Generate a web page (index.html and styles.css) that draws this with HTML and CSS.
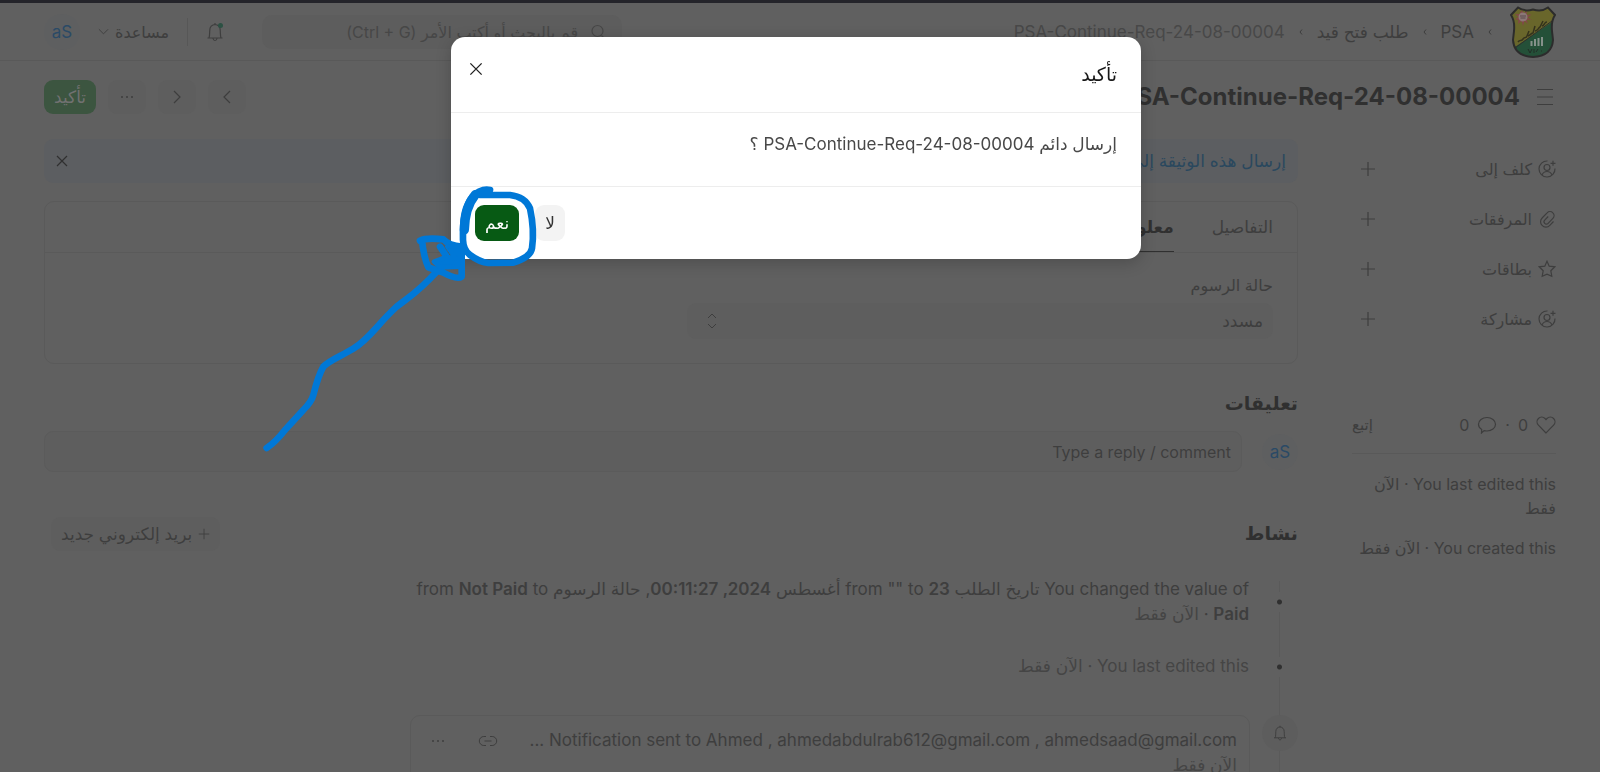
FILE: index.html
```html
<!DOCTYPE html>
<html lang="ar" dir="rtl">
<head>
<meta charset="utf-8">
<title>PSA-Continue-Req-24-08-00004</title>
<link rel="stylesheet" href="styles.css">
</head>
<body>
<svg class="defs" aria-hidden="true">
  <symbol id="plus" viewBox="0 0 16 16"><path d="M8 1v14M1 8h14"/></symbol>
  <symbol id="cross" viewBox="0 0 16 16"><path d="M3 3l10 10M13 3L3 13"/></symbol>
  <symbol id="assign" viewBox="0 0 18 18"><path d="M9.500 1A8 8 0 1 0 17 8.500M4 15c1-2.500 2.800-3.500 5-3.500s4 1 5 3.500M15 .8v5M12.500 3.300h5"/><circle cx="9" cy="7.500" r="3"/></symbol>
  <symbol id="clip" viewBox="0 0 18 18"><path d="M15.500 11.500l-3.700 3.900a5.200 5.200 0 0 1-7.700 0 5.200 5.200 0 0 1 0-7.400l5-5.200a3.900 3.900 0 0 1 5.800 0 3.900 3.900 0 0 1 0 5.500l-4.800 5a2.300 2.300 0 0 1-3.400 0 2.300 2.300 0 0 1 0-3.200l3.500-3.600"/></symbol>
  <symbol id="star" viewBox="0 0 18 18"><path d="M9 1.200l2.200 5 5.600.6-4 3.900 1 5.500L9 14.200 4.200 16.200l1-5.500-4-3.900 5.600-.6z"/></symbol>
  <symbol id="heart" viewBox="0 0 20 18"><path d="M10 17L2.400 9.200a4.800 4.800 0 0 1 0-6.700 4.700 4.700 0 0 1 6.600 0l1 1.100 1-1.100a4.700 4.700 0 0 1 6.600 0 4.800 4.800 0 0 1 0 6.700z"/></symbol>
  <symbol id="bubble" viewBox="0 0 20 18"><path d="M10 1.500c4.700 0 8.500 3 8.500 6.800S14.700 15 10 15c-1 0-2-.1-2.900-.4L4.500 17l.2-3.500C2.700 12.300 1.500 10.400 1.500 8.300 1.500 4.500 5.300 1.500 10 1.500z"/></symbol>
  <symbol id="bell" viewBox="0 0 18 20"><path d="M1.500 16h15M3 16c.8-2 .5-5 .8-8A5.300 5.300 0 0 1 9 2.500 5.300 5.300 0 0 1 14.200 8c.3 3 0 6 .8 8M7 16.500c.3 1.500 1 2 2 2s1.700-.5 2-2M9 1v1.500"/></symbol>
  <symbol id="link" viewBox="0 0 20 12"><path d="M8 1.500H5.800a4.500 4.500 0 0 0 0 9H8M12 1.500h2.200a4.500 4.500 0 0 1 0 9H12M6.500 6h7"/></symbol>
</svg>

<header class="navbar">
  <nav class="crumbs">
    <a href="#" class="logo" aria-label="الرئيسية">
      <svg viewBox="0 0 46 52" width="46" height="52">
        <path d="M8 1.500Q14 6 23 3.500Q32 6 38 1.500L45 9Q41 15 42 25L43 34Q42 50 23 51Q4 50 3 34L4 25Q5 15 1 9Z" fill="#245038"/>
        <path d="M8 1.500Q14 6 23 3.500Q32 6 38 1.500L45 9Q43 12 42 16L3.500 42Q2 35 4 25Q5 15 1 9Z" fill="#69662b"/>
        <path d="M42 15L5 42" stroke="#2f2f2c"/>
        <path d="M12 4l1.500 3.500L17 5l-.5 4 5-.5-4 3 4 2.500-5-.3 1.500 4.300-3.500-3L13 20l-1.500-5L8 18l.5-4L5 13l3.500-2L5 8l4 .3z" fill="#824848"/>
        <circle cx="13" cy="11" r="4.500" fill="#8b7777"/>
        <path d="M10 10h6M10.500 12h5" stroke="#5b4a4c"/>
        <path d="M8 36c2-3 3 0 5-3s3 0 4-3l2-5M18 30c3-1 3-3 5-3l2-7M25 25c3 0 3-3 5-4l3-6M32 20c3-1 2-4 5-4" fill="none" stroke="#34321c" stroke-width="1.500"/>
        <path d="M21.500 40v-5M25 40v-7M28.500 40v-8M32 40v-9" stroke="#85918a" stroke-width="2"/>
        <path d="M18 43l2 4 2-4M24 43v4M28 43l-2 3M31 45h1" fill="none" stroke="#222c27"/>
        <path d="M8 1.500Q14 6 23 3.500Q32 6 38 1.500L45 9Q41 15 42 25L43 34Q42 50 23 51Q4 50 3 34L4 25Q5 15 1 9Z" fill="none" stroke="#2c2c2c" stroke-width="2"/>
      </svg>
    </a>
    <svg class="sep" viewBox="0 0 4 6"><path d="M3 .5L1 3l2 2.500"/></svg>
    <a href="#">PSA</a>
    <svg class="sep" viewBox="0 0 4 6"><path d="M3 .5L1 3l2 2.500"/></svg>
    <a href="#">طلب فتح قيد</a>
    <svg class="sep" viewBox="0 0 4 6"><path d="M3 .5L1 3l2 2.500"/></svg>
    <span class="here">PSA-Continue-Req-24-08-00004</span>
  </nav>
  <div class="tools">
    <label class="search">
      <svg viewBox="0 0 16 16" class="icon small"><circle cx="7.500" cy="7" r="5.500"/><path d="M11.500 11.500l3 3"/></svg>
      <input type="text" aria-label="بحث" placeholder="قم بالبحث أو أكتب الأمر (Ctrl + G)">
    </label>
    <button class="plain notify" aria-label="الإشعارات"><svg class="icon bell"><use href="#bell"/></svg><span class="dot"></span></button>
    <span class="rule"></span>
    <button class="plain help">مساعدة <svg viewBox="0 0 12 8" class="chev"><path d="M1 1l5 5 5-5"/></svg></button>
    <span class="avatar">aS</span>
  </div>
</header>

<main class="page">
  <div class="page-head">
    <button class="plain" aria-label="القائمة"><svg viewBox="0 0 18 18" class="icon"><path d="M1 1.500h16M1 9h16M1 16.500h16"/></svg></button>
    <h1>PSA-Continue-Req-24-08-00004</h1>
    <div class="actions">
      <button class="btn" aria-label="السابق"><svg viewBox="0 0 16 16" class="icon small"><path d="M11 2L5 8l6 6"/></svg></button>
      <button class="btn" aria-label="التالي"><svg viewBox="0 0 16 16" class="icon small"><path d="M5 2l6 6-6 6"/></svg></button>
      <button class="btn" aria-label="المزيد"><svg viewBox="0 0 16 16" class="icon small dots"><circle cx="3" cy="8" r="1"/><circle cx="8" cy="8" r="1"/><circle cx="13" cy="8" r="1"/></svg></button>
      <button class="btn primary">تأكيد</button>
    </div>
  </div>

  <div class="columns">
    <aside class="side">
      <ul class="side-list">
        <li><svg class="icon"><use href="#assign"/></svg><span>كلف إلى</span><button class="plain" aria-label="إضافة"><svg class="icon small"><use href="#plus"/></svg></button></li>
        <li><svg class="icon"><use href="#clip"/></svg><span>المرفقات</span><button class="plain" aria-label="إضافة"><svg class="icon small"><use href="#plus"/></svg></button></li>
        <li><svg class="icon"><use href="#star"/></svg><span>بطاقات</span><button class="plain" aria-label="إضافة"><svg class="icon small"><use href="#plus"/></svg></button></li>
        <li><svg class="icon"><use href="#assign"/></svg><span>مشاركة</span><button class="plain" aria-label="إضافة"><svg class="icon small"><use href="#plus"/></svg></button></li>
      </ul>
      <div class="stats">
        <svg class="icon wide"><use href="#heart"/></svg><span>0</span><span>·</span>
        <svg class="icon wide"><use href="#bubble"/></svg><span>0</span>
        <a href="#" class="follow">إتبع</a>
      </div>
      <p>You last edited this · الآن فقط</p>
      <p>You created this · الآن فقط</p>
    </aside>

    <section class="main">
      <div class="banner"><span>إرسال هذه الوثيقة إلى التأكيد</span><button class="plain" aria-label="إغلاق"><svg class="icon small"><use href="#cross"/></svg></button></div>

      <div class="card">
        <div class="tabs">
          <a href="#">التفاصيل</a>
          <a href="#" class="active">معلومات الرسوم</a>
        </div>
        <div class="field">
          <label for="fee">حالة الرسوم</label>
          <div class="select">
            <select id="fee"><option>مسدد</option></select>
            <svg viewBox="0 0 10 16"><path d="M1 5l4-4 4 4M1 11l4 4 4-4"/></svg>
          </div>
        </div>
      </div>

      <h2>تعليقات</h2>
      <div class="comment">
        <span class="avatar">aS</span>
        <input type="text" aria-label="تعليق" placeholder="Type a reply / comment">
      </div>

      <div class="activity-head">
        <h2>نشاط</h2>
        <button class="btn mail"><svg class="icon tiny"><use href="#plus"/></svg> بريد إلكتروني جديد</button>
      </div>

      <ol class="timeline">
        <li><span class="mark"></span><div class="entry">You changed the value of تاريخ الطلب from "" to <b>23</b> أغسطس <b>2024, 00:11:27</b>, حالة الرسوم from <b>Not Paid</b> to <b>Paid</b> · <span class="time">الآن فقط</span></div></li>
        <li><span class="mark"></span><div class="entry light">You last edited this · الآن فقط</div></li>
        <li class="mail-item"><span class="badge"><svg class="icon small"><use href="#bell"/></svg></span>
          <div class="note">
            <div>Notification sent to Ahmed , ahmedabdulrab612@gmail.com , ahmedsaad@gmail.com ...<br><span class="time">الآن فقط</span></div>
            <button class="plain" aria-label="رابط"><svg class="link"><use href="#link"/></svg></button>
            <button class="plain" aria-label="المزيد"><svg viewBox="0 0 16 16" class="icon small dots"><circle cx="3" cy="8" r="1"/><circle cx="8" cy="8" r="1"/><circle cx="13" cy="8" r="1"/></svg></button>
          </div>
        </li>
      </ol>
    </section>
  </div>
</main>

<div class="overlay">
  <div class="modal" role="dialog" aria-labelledby="dlg-title">
    <div class="modal-head"><h3 id="dlg-title">تأكيد</h3><button class="plain" aria-label="إغلاق"><svg class="close"><use href="#cross"/></svg></button></div>
    <div class="modal-body">إرسال دائم PSA-Continue-Req-24-08-00004 ؟</div>
    <div class="modal-foot"><button class="no">لا</button><button class="yes">نعم</button></div>
  </div>
</div>

<svg class="ink" viewBox="0 0 1020 840" aria-hidden="true">
  <path d="M750 30C730 24 705 38 690 60C672 90 668 120 669 180Q670 210 690 225Q720 247 745 249L820 248Q872 232 876 205Q884 150 870 85Q855 50 810 45L720 45"/>
  <path d="M706 44C685 70 674 100 673 150" stroke-width="28"/>
  <path d="M80 804Q105 788 135 750L190 690Q215 665 220 645Q235 585 250 560C270 540 300 530 340 506C390 475 410 435 470 380C510 348 530 340 590 275L665 210"/>
  <path d="M540 182Q560 172 610 178Q625 195 665 200L665 290Q650 300 610 278L565 262Q552 235 546 182M600 200L630 245"/>
  <path d="M582 245L615 232L646 234L622 200L668 198V260L600 262Z" class="fill"/>
</svg>
</body>
</html>
```
FILE: styles.css
```css
* { box-sizing: border-box; }
body {
  margin: 0;
  background: #606060;
  color: #3e3e3e;
  font: 17px/24px Inter, "DejaVu Sans", sans-serif;
  border-top: 3px solid #24242a;
  height: 100vh;
  overflow: hidden;
}
.defs { position: absolute; width: 0; height: 0; }
a { color: inherit; text-decoration: none; }
button, input, select { font: inherit; color: inherit; }
h1, h2, h3, p, ul, ol { margin: 0; padding: 0; list-style: none; }
svg { fill: none; stroke: currentColor; flex: none; }
.logo svg { stroke: none; display: block; }
.icon { width: 18px; height: 18px; stroke-width: 1.2; }
.icon.small { width: 16px; height: 16px; }
.icon.tiny { width: 12px; height: 12px; }
.icon.wide { width: 20px; }
.icon.dots { fill: currentColor; stroke: none; }
.plain { display: flex; align-items: center; border: 0; padding: 0; background: none; }

.navbar {
  display: flex;
  justify-content: space-between;
  align-items: center;
  height: 58px;
  padding: 0 44px;
  border-bottom: 1px solid #595959;
}
.crumbs { display: flex; align-items: center; gap: 14px; }
.logo { margin-left: 4px; }
.sep { width: 4px; height: 6px; }
.here { color: #484848; }
.tools { display: flex; align-items: center; font-size: 16px; }
.search {
  display: flex;
  align-items: center;
  gap: 12px;
  width: 360px;
  height: 34px;
  padding: 0 16px;
  border-radius: 10px;
  background: #5d5d5d;
  color: #474747;
}
.search input { flex: 1; min-width: 0; border: 0; padding: 0; background: none; }
input::placeholder { color: inherit; opacity: 1; }
.notify { position: relative; margin-right: 38px; }
.bell { height: 20px; }
.dot { position: absolute; top: 1px; right: 1px; width: 5px; height: 5px; border-radius: 50%; background: #2c5143; }
.rule { width: 1px; height: 28px; margin: 0 18px; background: #575757; }
.help { gap: 6px; }
.chev { width: 11px; height: 8px; }
.avatar {
  display: flex;
  align-items: center;
  justify-content: center;
  width: 36px;
  height: 36px;
  border-radius: 50%;
  background: #5e5f60;
  color: #2a4a66;
}
.tools .avatar { margin-right: 18px; font-size: 17px; }

.page { padding: 0 44px; }
.page-head { display: flex; align-items: center; gap: 16px; height: 72px; padding-right: 2px; }
h1 { font-size: 24px; line-height: 32px; font-weight: 700; color: #303030; }
.actions { display: flex; gap: 12px; margin-right: auto; }
.btn {
  display: flex;
  align-items: center;
  justify-content: center;
  gap: 6px;
  min-width: 38px;
  height: 34px;
  padding: 0 10px;
  border: 0;
  border-radius: 9px;
  background: #5e5e5e;
}
.primary { background: #3c5540; color: #717171; }

.columns { display: flex; gap: 54px; }
.side { width: 204px; flex: none; padding-top: 24px; font-size: 16px; }
.side-list { display: grid; gap: 26px; }
.side-list li { display: flex; align-items: center; gap: 6px; }
.side-list button { margin-right: auto; padding-left: 8px; }
.stats {
  display: flex;
  align-items: center;
  gap: 8px;
  margin: 82px 0 18px;
  padding-bottom: 16px;
  border-bottom: 1px solid #595959;
}
.follow { margin-right: auto; font-size: 15px; }
.side p { margin-bottom: 16px; }
.main { flex: 1; min-width: 0; padding-top: 6px; }
.banner {
  display: flex;
  align-items: center;
  justify-content: space-between;
  height: 44px;
  padding: 0 12px 0 10px;
  border-radius: 9px;
  background: #5c5e61;
  color: #2a485e;
}
.banner button { color: #303030; }
.card { margin-top: 18px; border: 1px solid #5a5a5a; border-radius: 10px; }
.tabs { display: flex; gap: 38px; height: 51px; padding: 0 24px; border-bottom: 1px solid #5a5a5a; }
.tabs a { line-height: 50px; }
.tabs .active { font-weight: 600; color: #303030; border-bottom: 1px solid #303030; }
.field { width: 50%; padding: 20px 24px 24px 16px; }
.field label { display: block; margin-bottom: 6px; font-size: 16px; }
.select { position: relative; }
.select select {
  width: 100%;
  height: 36px;
  padding: 0 10px;
  border: 0;
  border-radius: 9px;
  appearance: none;
  background: #5e5e5e;
}
.select svg { position: absolute; left: 20px; top: 10px; width: 10px; height: 16px; }
h2 { font-size: 19px; line-height: 28px; font-weight: 700; color: #303030; }
.main > h2 { margin-top: 26px; }
.comment { display: flex; gap: 20px; align-items: center; margin-top: 13px; }
.comment input {
  flex: 1;
  height: 41px;
  padding: 0 10px;
  border: 1px solid #5b5b5b;
  border-radius: 9px;
  background: #5e5e5e;
  font-size: 16px;
}
.activity-head { display: flex; align-items: center; justify-content: space-between; margin-top: 45px; padding-left: 7px; }
.timeline { position: relative; margin-top: 26px; }
.timeline::before { content: ""; position: absolute; right: 18px; top: 4px; height: 300px; border-right: 1px solid #5a5a5a; }
.timeline li { position: relative; display: flex; align-items: center; gap: 26px; padding-right: 14px; margin-bottom: 27px; }
.mark { width: 9px; height: 20px; background: radial-gradient(circle, #303030 2px, #606060 3px); }
.entry { width: 848px; line-height: 25px; }
.entry b { font-weight: 600; }
.time, .light { color: #454545; }
.timeline .mail-item { align-items: flex-start; gap: 12px; padding-right: 0; margin-top: 36px; }
.badge { display: flex; align-items: center; justify-content: center; width: 36px; height: 36px; border-radius: 50%; background: #5d5d5d; }
.note { display: flex; align-items: flex-start; gap: 32px; width: 840px; height: 90px; padding: 12px 12px 0 24px; border: 1px solid #5a5a5a; border-radius: 10px; }
.note div { flex: 1; line-height: 25px; white-space: nowrap; }
.note button { height: 26px; }
.link { width: 20px; height: 12px; }

.overlay { position: fixed; inset: 0; display: flex; justify-content: center; align-items: flex-start; padding: 37px 8px 0 0; }
.modal {
  width: 690px;
  border-radius: 14px;
  background: #fff;
  color: #484848;
  box-shadow: 0 4px 16px rgba(0, 0, 0, .2);
}
.modal-head { display: flex; justify-content: space-between; align-items: flex-start; height: 76px; padding: 23px 24px 0 16px; border-bottom: 1px solid #ededed; }
.modal h3 { font-size: 19px; line-height: 30px; font-weight: 500; color: #171717; }
.close { width: 18px; height: 18px; color: #222; stroke-width: 1.2; }
.modal-body { height: 74px; padding: 19px 24px; border-bottom: 1px solid #ededed; }
.modal-foot { display: flex; justify-content: flex-end; gap: 16px; padding: 18px 24px; }
.modal-foot button { height: 36px; padding: 0 10px; border: 0; border-radius: 9px; background: #f3f3f3; color: #333; }
.modal-foot .yes { background: #075a14; color: #fff; }

.ink { position: absolute; left: 240px; top: 180px; width: 340px; height: 280px; stroke: #0078d7; stroke-width: 20; stroke-linecap: round; stroke-linejoin: round; pointer-events: none; }
.ink .fill { fill: #0078d7; stroke-width: 14; }
```
